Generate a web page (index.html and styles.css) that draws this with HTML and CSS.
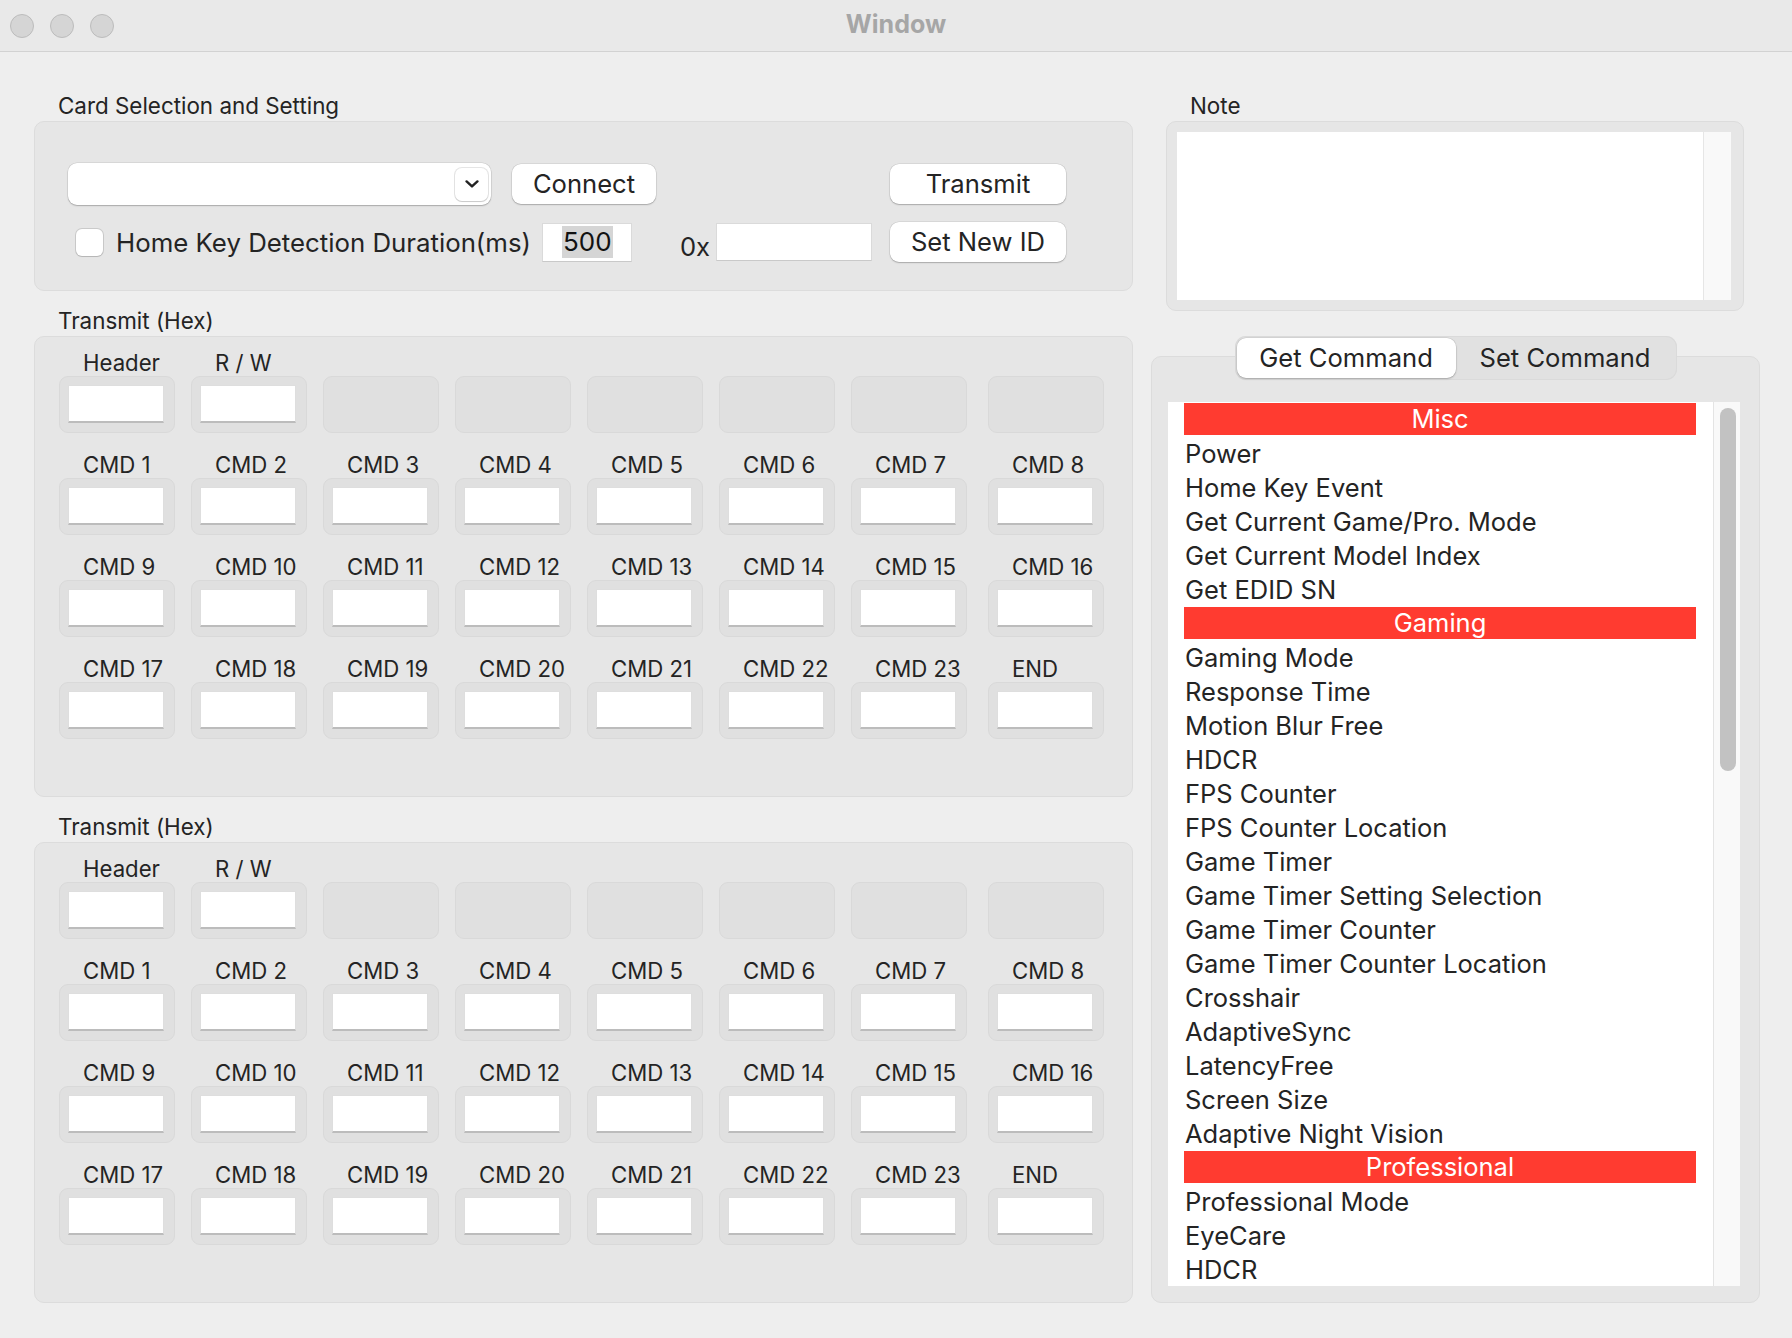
FILE: index.html
```html
<!DOCTYPE html>
<html lang="en">
<head>
<meta charset="utf-8">
<title>Window</title>
<link rel="stylesheet" href="styles.css">
</head>
<body>
<div class="window">
  <header class="titlebar">
    <div class="lights"><span class="light"></span><span class="light"></span><span class="light"></span></div>
    <div class="title">Window</div>
    <div></div>
  </header>
  <main class="content">
    <div class="col-left">
      <section class="group">
        <div class="glabel">Card Selection and Setting</div>
        <div class="gbox card-box">
          <div class="card-row">
            <div class="combo"><span class="combo-btn"><svg width="14" height="8" viewBox="0 0 14 8"><path d="M1.6 1.4 L7 6.4 L12.4 1.4" fill="none" stroke="#222" stroke-width="2.4" stroke-linecap="round" stroke-linejoin="round"/></svg></span></div>
            <div class="btn connect">Connect</div>
            <div class="btn wide push">Transmit</div>
          </div>
          <div class="card-row row2">
            <span class="check"></span>
            <span class="chk-label">Home Key Detection Duration(ms)</span>
            <span class="field dur"><span class="sel">500</span></span>
            <span class="hex-prefix push">0x</span>
            <span class="field hexid"></span>
            <div class="btn wide setid">Set New ID</div>
          </div>
        </div>
      </section>

      <section class="group">
        <div class="glabel">Transmit (Hex)</div>
        <div class="gbox tx-box">
          <div class="tx-grid">
            <div class="slot"><div class="slabel">Header</div><div class="cell"><span class="inp"></span></div></div>
            <div class="slot"><div class="slabel">R / W</div><div class="cell"><span class="inp"></span></div></div>
            <div class="slot"><div class="slabel"></div><div class="cell"></div></div>
            <div class="slot"><div class="slabel"></div><div class="cell"></div></div>
            <div class="slot"><div class="slabel"></div><div class="cell"></div></div>
            <div class="slot"><div class="slabel"></div><div class="cell"></div></div>
            <div class="slot"><div class="slabel"></div><div class="cell"></div></div>
            <div class="slot"><div class="slabel"></div><div class="cell"></div></div>

            <div class="slot"><div class="slabel">CMD 1</div><div class="cell"><span class="inp"></span></div></div>
            <div class="slot"><div class="slabel">CMD 2</div><div class="cell"><span class="inp"></span></div></div>
            <div class="slot"><div class="slabel">CMD 3</div><div class="cell"><span class="inp"></span></div></div>
            <div class="slot"><div class="slabel">CMD 4</div><div class="cell"><span class="inp"></span></div></div>
            <div class="slot"><div class="slabel">CMD 5</div><div class="cell"><span class="inp"></span></div></div>
            <div class="slot"><div class="slabel">CMD 6</div><div class="cell"><span class="inp"></span></div></div>
            <div class="slot"><div class="slabel">CMD 7</div><div class="cell"><span class="inp"></span></div></div>
            <div class="slot"><div class="slabel">CMD 8</div><div class="cell"><span class="inp"></span></div></div>

            <div class="slot"><div class="slabel">CMD 9</div><div class="cell"><span class="inp"></span></div></div>
            <div class="slot"><div class="slabel">CMD 10</div><div class="cell"><span class="inp"></span></div></div>
            <div class="slot"><div class="slabel">CMD 11</div><div class="cell"><span class="inp"></span></div></div>
            <div class="slot"><div class="slabel">CMD 12</div><div class="cell"><span class="inp"></span></div></div>
            <div class="slot"><div class="slabel">CMD 13</div><div class="cell"><span class="inp"></span></div></div>
            <div class="slot"><div class="slabel">CMD 14</div><div class="cell"><span class="inp"></span></div></div>
            <div class="slot"><div class="slabel">CMD 15</div><div class="cell"><span class="inp"></span></div></div>
            <div class="slot"><div class="slabel">CMD 16</div><div class="cell"><span class="inp"></span></div></div>

            <div class="slot"><div class="slabel">CMD 17</div><div class="cell"><span class="inp"></span></div></div>
            <div class="slot"><div class="slabel">CMD 18</div><div class="cell"><span class="inp"></span></div></div>
            <div class="slot"><div class="slabel">CMD 19</div><div class="cell"><span class="inp"></span></div></div>
            <div class="slot"><div class="slabel">CMD 20</div><div class="cell"><span class="inp"></span></div></div>
            <div class="slot"><div class="slabel">CMD 21</div><div class="cell"><span class="inp"></span></div></div>
            <div class="slot"><div class="slabel">CMD 22</div><div class="cell"><span class="inp"></span></div></div>
            <div class="slot"><div class="slabel">CMD 23</div><div class="cell"><span class="inp"></span></div></div>
            <div class="slot"><div class="slabel">END</div><div class="cell"><span class="inp"></span></div></div>
          </div>
        </div>
      </section>

      <section class="group">
        <div class="glabel">Transmit (Hex)</div>
        <div class="gbox tx-box">
          <div class="tx-grid">
            <div class="slot"><div class="slabel">Header</div><div class="cell"><span class="inp"></span></div></div>
            <div class="slot"><div class="slabel">R / W</div><div class="cell"><span class="inp"></span></div></div>
            <div class="slot"><div class="slabel"></div><div class="cell"></div></div>
            <div class="slot"><div class="slabel"></div><div class="cell"></div></div>
            <div class="slot"><div class="slabel"></div><div class="cell"></div></div>
            <div class="slot"><div class="slabel"></div><div class="cell"></div></div>
            <div class="slot"><div class="slabel"></div><div class="cell"></div></div>
            <div class="slot"><div class="slabel"></div><div class="cell"></div></div>

            <div class="slot"><div class="slabel">CMD 1</div><div class="cell"><span class="inp"></span></div></div>
            <div class="slot"><div class="slabel">CMD 2</div><div class="cell"><span class="inp"></span></div></div>
            <div class="slot"><div class="slabel">CMD 3</div><div class="cell"><span class="inp"></span></div></div>
            <div class="slot"><div class="slabel">CMD 4</div><div class="cell"><span class="inp"></span></div></div>
            <div class="slot"><div class="slabel">CMD 5</div><div class="cell"><span class="inp"></span></div></div>
            <div class="slot"><div class="slabel">CMD 6</div><div class="cell"><span class="inp"></span></div></div>
            <div class="slot"><div class="slabel">CMD 7</div><div class="cell"><span class="inp"></span></div></div>
            <div class="slot"><div class="slabel">CMD 8</div><div class="cell"><span class="inp"></span></div></div>

            <div class="slot"><div class="slabel">CMD 9</div><div class="cell"><span class="inp"></span></div></div>
            <div class="slot"><div class="slabel">CMD 10</div><div class="cell"><span class="inp"></span></div></div>
            <div class="slot"><div class="slabel">CMD 11</div><div class="cell"><span class="inp"></span></div></div>
            <div class="slot"><div class="slabel">CMD 12</div><div class="cell"><span class="inp"></span></div></div>
            <div class="slot"><div class="slabel">CMD 13</div><div class="cell"><span class="inp"></span></div></div>
            <div class="slot"><div class="slabel">CMD 14</div><div class="cell"><span class="inp"></span></div></div>
            <div class="slot"><div class="slabel">CMD 15</div><div class="cell"><span class="inp"></span></div></div>
            <div class="slot"><div class="slabel">CMD 16</div><div class="cell"><span class="inp"></span></div></div>

            <div class="slot"><div class="slabel">CMD 17</div><div class="cell"><span class="inp"></span></div></div>
            <div class="slot"><div class="slabel">CMD 18</div><div class="cell"><span class="inp"></span></div></div>
            <div class="slot"><div class="slabel">CMD 19</div><div class="cell"><span class="inp"></span></div></div>
            <div class="slot"><div class="slabel">CMD 20</div><div class="cell"><span class="inp"></span></div></div>
            <div class="slot"><div class="slabel">CMD 21</div><div class="cell"><span class="inp"></span></div></div>
            <div class="slot"><div class="slabel">CMD 22</div><div class="cell"><span class="inp"></span></div></div>
            <div class="slot"><div class="slabel">CMD 23</div><div class="cell"><span class="inp"></span></div></div>
            <div class="slot"><div class="slabel">END</div><div class="cell"><span class="inp"></span></div></div>
          </div>
        </div>
      </section>
    </div>

    <div class="col-right">
      <section class="group note-group">
        <div class="glabel">Note</div>
        <div class="gbox note-box">
          <div class="note-area">
            <div class="note-text"></div>
            <div class="note-scroll"></div>
          </div>
        </div>
      </section>

      <section class="tabs">
        <div class="tabbar">
          <div class="seg active">Get Command</div>
          <div class="seg">Set Command</div>
        </div>
        <div class="pane">
          <div class="list">
            <div class="items">
              <div class="lh">Misc</div>
              <div class="li">Power</div>
              <div class="li">Home Key Event</div>
              <div class="li">Get Current Game/Pro. Mode</div>
              <div class="li">Get Current Model Index</div>
              <div class="li">Get EDID SN</div>
              <div class="lh">Gaming</div>
              <div class="li">Gaming Mode</div>
              <div class="li">Response Time</div>
              <div class="li">Motion Blur Free</div>
              <div class="li">HDCR</div>
              <div class="li">FPS Counter</div>
              <div class="li">FPS Counter Location</div>
              <div class="li">Game Timer</div>
              <div class="li">Game Timer Setting Selection</div>
              <div class="li">Game Timer Counter</div>
              <div class="li">Game Timer Counter Location</div>
              <div class="li">Crosshair</div>
              <div class="li">AdaptiveSync</div>
              <div class="li">LatencyFree</div>
              <div class="li">Screen Size</div>
              <div class="li">Adaptive Night Vision</div>
              <div class="lh">Professional</div>
              <div class="li">Professional Mode</div>
              <div class="li">EyeCare</div>
              <div class="li">HDCR</div>
            </div>
            <div class="scrollcol"><div class="thumb"></div></div>
          </div>
        </div>
      </section>
    </div>
  </main>
</div>
</body>
</html>
```

FILE: styles.css
```css
* { box-sizing: border-box; }

html, body {
  margin: 0;
  padding: 0;
}

body {
  width: 1792px;
  height: 1338px;
  overflow: hidden;
  background: #eeeeee;
  font-family: "Inter", "Liberation Sans", sans-serif;
  color: #242424;
}

.window {
  width: 1792px;
  height: 1338px;
}

/* ---------- title bar ---------- */
.titlebar {
  height: 52px;
  background: #e9e9e9;
  border-bottom: 1px solid #d2d2d2;
  display: grid;
  grid-template-columns: 1fr auto 1fr;
  align-items: center;
}

.lights {
  display: flex;
  gap: 16px;
  padding-left: 10px;
  padding-top: 1px;
}

.light {
  width: 24px;
  height: 24px;
  border-radius: 50%;
  background: #d5d5d5;
  border: 1px solid #bcbcbc;
}

.title {
  font-weight: 700;
  font-size: 25px;
  color: #a6a6a6;
  margin-bottom: 4px;
}

/* ---------- layout ---------- */
.content {
  display: flex;
  padding-top: 41px;
}

.col-left {
  width: 1099px;
  margin-left: 34px;
}

.col-right {
  width: 609px;
  margin-left: 18px;
}

.glabel {
  height: 28px;
  line-height: 26px;
  padding-left: 24px;
  font-size: 22.4px;
  white-space: nowrap;
}

.gbox {
  background: #e6e6e6;
  border: 1px solid #dcdcdc;
  border-radius: 10px;
}

.group + .group {
  margin-top: 17px;
}

/* ---------- card selection ---------- */
.card-box {
  height: 170px;
  padding: 41px 66px 0 33px;
}

.card-row {
  display: flex;
  align-items: center;
  height: 42px;
}

.card-row.row2 {
  margin-top: 17px;
  height: 40px;
}

.push {
  margin-left: auto;
}

.combo {
  width: 423px;
  height: 42px;
  background: #fff;
  border-radius: 9px;
  box-shadow: 0 0 0 0.5px rgba(0, 0, 0, 0.12), 0 1px 1.5px rgba(0, 0, 0, 0.22);
  display: flex;
  justify-content: flex-end;
  align-items: center;
  padding-right: 3px;
}

.combo-btn {
  width: 33px;
  height: 33px;
  border-radius: 7px;
  background: #fff;
  box-shadow: 0 0 0 1px rgba(0, 0, 0, 0.10), 0 1px 1px rgba(0, 0, 0, 0.12);
  display: flex;
  align-items: center;
  justify-content: center;
}

.btn {
  height: 40px;
  background: #fff;
  border-radius: 9px;
  box-shadow: 0 0 0 0.5px rgba(0, 0, 0, 0.12), 0 1px 1.5px rgba(0, 0, 0, 0.22);
  font-size: 25.6px;
  line-height: 40px;
  text-align: center;
  color: #242424;
  white-space: nowrap;
}

.btn.connect {
  width: 144px;
  margin-left: 21px;
}

.btn.wide {
  width: 176px;
}

.btn.setid {
  margin-left: 18px;
}

.check {
  width: 27px;
  height: 27px;
  margin-left: 8px;
  border-radius: 6px;
  background: #fff;
  box-shadow: 0 0 0 1px rgba(0, 0, 0, 0.12), 0 1px 1px rgba(0, 0, 0, 0.10);
}

.chk-label {
  width: 411px;
  margin-left: 13px;
  font-size: 25.8px;
  white-space: nowrap;
}

.field {
  height: 39px;
  background: #fff;
  border: 1px solid #dadada;
  border-bottom-color: #c9c9c9;
  display: flex;
  align-items: center;
}

.field.dur {
  width: 90px;
  margin-left: 15px;
  padding-left: 19px;
}

.sel {
  background: #d5d5d5;
  color: #111;
  font-size: 26px;
  line-height: 32px;
  padding: 0 1px;
}

.hex-prefix {
  font-size: 25.6px;
  padding-top: 8px;
}

.field.hexid {
  width: 156px;
  height: 38px;
  margin-left: 6px;
}

/* ---------- transmit grid ---------- */
.tx-box {
  height: 461px;
  padding: 12px 0 0 24px;
}

.tx-grid {
  display: grid;
  grid-template-columns: repeat(7, 132px) 121px;
  row-gap: 18px;
}

.slot:nth-child(8n) {
  justify-self: end;
}

.slabel {
  height: 27px;
  line-height: 27px;
  padding-left: 24px;
  font-size: 22.2px;
  white-space: nowrap;
}

.cell {
  width: 116px;
  height: 57px;
  background: #e0e0e0;
  border: 1px solid #d9d9d9;
  border-radius: 9px;
  padding: 8px;
}

.inp {
  display: block;
  width: 96px;
  height: 38px;
  background: #fff;
  border: 1px solid #dedede;
  border-bottom: 2px solid #bcbcbc;
}

/* ---------- note ---------- */
.note-group {
  margin: 0 16px 0 15px;
}

.note-box {
  height: 190px;
  padding: 10px 12px 10px 10px;
}

.note-area {
  display: flex;
  height: 168px;
}

.note-text {
  flex: 1;
  background: #fff;
}

.note-scroll {
  width: 28px;
  background: #f9f9f9;
  border-left: 1px solid #e6e6e6;
}

/* ---------- tabs ---------- */
.tabs {
  margin-top: 25px;
}

.tabbar {
  position: relative;
  z-index: 1;
  width: 442px;
  height: 44px;
  margin: 0 auto;
  padding: 2px;
  display: flex;
  background: #e1e1e1;
  border-radius: 11px;
  box-shadow: inset 0 0 0 1px #dadada;
}

.seg {
  flex: 1;
  font-size: 25.6px;
  line-height: 40px;
  text-align: center;
  white-space: nowrap;
  color: #242424;
}

.seg.active {
  flex: 0 0 219px;
  background: #fff;
  border-radius: 9px;
  box-shadow: 0 0 0 0.5px rgba(0, 0, 0, 0.10), 0 1px 2px rgba(0, 0, 0, 0.22);
}

.pane {
  margin-top: -24px;
  height: 947px;
  background: #e6e6e6;
  border: 1px solid #dcdcdc;
  border-radius: 10px;
  padding: 45px 19px 16px 16px;
}

.list {
  height: 884px;
  display: flex;
  background: #fff;
}

.items {
  flex: 1;
  overflow: hidden;
  padding: 0 17px 0 16px;
}

.lh {
  height: 32px;
  margin: 1px 0;
  line-height: 32px;
  background: #ff3b30;
  color: #fff;
  text-align: center;
  font-size: 25.5px;
}

.li {
  height: 34px;
  line-height: 35px;
  padding-left: 1px;
  font-size: 25.5px;
  white-space: nowrap;
  color: #242424;
}

.scrollcol {
  width: 27px;
  background: #f9f9f9;
  border-left: 1px solid #e4e4e4;
  padding: 6px 0 0 6px;
}

.thumb {
  width: 16px;
  height: 363px;
  border-radius: 8px;
  background: #c2c2c2;
}
```
